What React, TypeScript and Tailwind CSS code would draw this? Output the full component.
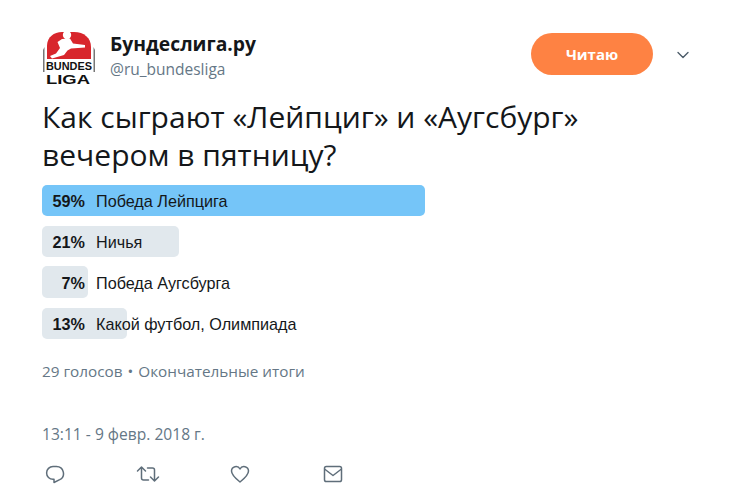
import { ChevronDown } from 'lucide-react';

const options = [
  { pct: '59%', label: 'Победа Лейпцига', width: 'w-[383px]', fill: 'bg-[#75c5f8]', h: 'h-[31px]' },
  { pct: '21%', label: 'Ничья', width: 'w-[137px]', fill: 'bg-[#e1e8ed]', h: 'h-[31px]' },
  { pct: '7%', label: 'Победа Аугсбурга', width: 'w-[46px]', fill: 'bg-[#e1e8ed]', h: 'h-[32px]' },
  { pct: '13%', label: 'Какой футбол, Олимпиада', width: 'w-[85px]', fill: 'bg-[#e1e8ed]', h: 'h-[31px]' },
];

const Logo = () => (
  <svg width="54" height="60" viewBox="0 0 54 60" className="shrink-0">
    <path d="M1 21 V43 H2.500 V18 Z" fill="#777" />
    <path d="M51.500 18 V43 H53 V21 Z" fill="#777" />
    <path d="M5 30 V17 C5 8 12 3 20 3 H32 C42 3 49 9 49 18 V30 Z" fill="#d8262c" />
    <circle cx="25" cy="6" r="4.200" fill="#fff" />
    <path d="M8 27 L14 24.500 L18 19 L15.500 13 L20 10 L28 9.500 L31 14.500 L43 16 L43 18.500 L29 19.500 L25.500 21.500 L22 26 L10 29.500 Z" fill="#fff" />
    <text x="27" y="41" textAnchor="middle" textLength="46" lengthAdjust="spacingAndGlyphs" fontFamily="'Liberation Sans', sans-serif" fontWeight="700" fontSize="11" fill="#111">
      BUNDES
    </text>
    <text x="26" y="55" textAnchor="middle" textLength="44" lengthAdjust="spacingAndGlyphs" fontFamily="'Liberation Sans', sans-serif" fontWeight="700" fontSize="12.500" fill="#111">
      LIGA
    </text>
  </svg>
);

const ActionIcons = () => (
  <div className="mt-[20px] flex items-center text-[#5f6e7a]">
    <svg width="20" height="20" viewBox="0 0 20 20" fill="none" stroke="currentColor" strokeWidth="1.5" strokeLinejoin="round" className="ml-[3px]">
      <path d="M8 2.500h3.500a7 7 0 0 1 3.200 13.200L9 18.500v-3.200H8a6.400 6.400 0 0 1 0-12.800Z" />
    </svg>
    <svg width="24" height="20" viewBox="0 0 24 20" fill="none" stroke="currentColor" strokeWidth="1.5" strokeLinecap="round" strokeLinejoin="round" className="ml-[71px]">
      <path d="M1.500 7 5.500 3l4 4M5.500 3.500V14a2 2 0 0 0 2 2h5" />
      <path d="M22.500 13l-4 4-4-4M18.500 16.500V6a2 2 0 0 0-2-2h-5" />
    </svg>
    <svg width="20" height="20" viewBox="0 0 20 20" fill="none" stroke="currentColor" strokeWidth="1.5" strokeLinejoin="round" className="ml-[70px]">
      <path d="M10 18C5 14 1.500 11 1.500 7A4.500 4.500 0 0 1 10 5a4.500 4.500 0 0 1 8.500 2c0 4-3.500 7-8.500 11Z" />
    </svg>
    <svg width="20" height="20" viewBox="0 0 20 20" fill="none" stroke="currentColor" strokeWidth="1.5" strokeLinejoin="round" className="ml-[73px]">
      <rect x="1.500" y="2.500" width="17" height="15" rx="1.800" />
      <path d="M1.500 5 10 11.500 18.500 5" />
    </svg>
  </div>
);

export default function App() {
  return (
    <div className="h-[504px] w-[730px] overflow-hidden bg-white pl-[42px] pt-[29px] font-['Liberation_Sans',sans-serif]">
      <div className="flex items-start">
        <Logo />
        <div className="ml-[14px] mt-[2px] flex w-[421px] flex-col font-['Open_Sans',sans-serif]">
          <span className="text-[19.300px] font-bold leading-[26px] text-[#14171a]">Бундеслига.ру</span>
          <span className="mt-[2px] text-[15.500px] leading-[20px] text-[#657786]">@ru_bundesliga</span>
        </div>
        <button className="mt-[4px] flex h-[42px] w-[122px] items-center justify-center rounded-full bg-[#fe8243] font-['Open_Sans',sans-serif] text-[15px] font-bold text-white">
          Читаю
        </button>
        <ChevronDown size={20} strokeWidth={1.6} className="ml-[20px] mt-[16px] text-[#4b5b68]" />
      </div>

      <h1 className="mt-[9px] font-['Open_Sans',sans-serif] text-[30px] font-normal leading-[38px] text-[#14171a]">
        Как сыграют «Лейпциг» и «Аугсбург»
        <br />
        вечером в пятницу?
      </h1>

      <div className="mt-[11px] flex flex-col gap-[9.500px] text-[16.200px] text-[#14171a]">
        {options.map((o) => (
          <div key={o.label} className={`relative flex items-center pt-[2px] ${o.h}`}>
            <div className={`absolute inset-y-0 left-0 rounded-[5px] ${o.width} ${o.fill}`} />
            <span className="relative w-[43px] text-right font-bold">{o.pct}</span>
            <span className="relative ml-[11px]">{o.label}</span>
          </div>
        ))}
      </div>

      <div className="mt-[22px] font-['Open_Sans',sans-serif] text-[15.300px] leading-[20px] text-[#657786]">
        29 голосов <span className="mx-[1px]">•</span> Окончательные итоги
      </div>
      <div className="mt-[43px] font-['Open_Sans',sans-serif] text-[15.600px] leading-[20px] text-[#657786]">
        13:11 - 9 февр. 2018 г.
      </div>
      <ActionIcons />
    </div>
  );
}
